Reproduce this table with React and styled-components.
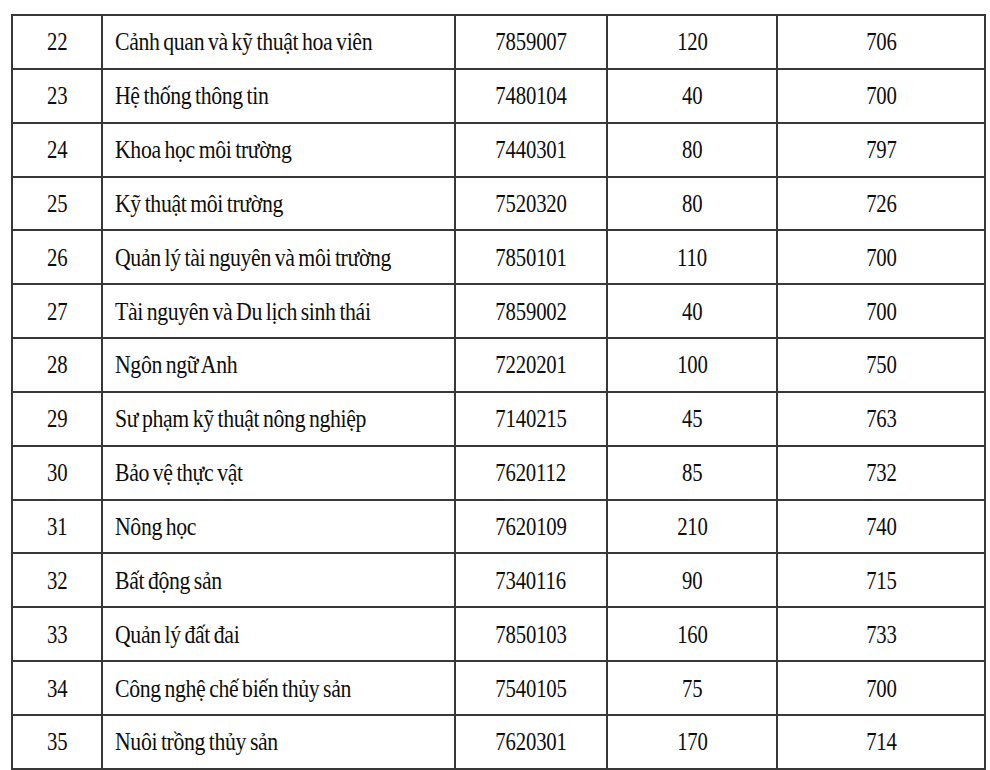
import React from 'react'
import styled, { createGlobalStyle } from 'styled-components'

const rows = [
  [22, 'Cảnh quan và kỹ thuật hoa viên', '7859007', 120, 706],
  [23, 'Hệ thống thông tin', '7480104', 40, 700],
  [24, 'Khoa học môi trường', '7440301', 80, 797],
  [25, 'Kỹ thuật môi trường', '7520320', 80, 726],
  [26, 'Quản lý tài nguyên và môi trường', '7850101', 110, 700],
  [27, 'Tài nguyên và Du lịch sinh thái', '7859002', 40, 700],
  [28, 'Ngôn ngữ Anh', '7220201', 100, 750],
  [29, 'Sư phạm kỹ thuật nông nghiệp', '7140215', 45, 763],
  [30, 'Bảo vệ thực vật', '7620112', 85, 732],
  [31, 'Nông học', '7620109', 210, 740],
  [32, 'Bất động sản', '7340116', 90, 715],
  [33, 'Quản lý đất đai', '7850103', 160, 733],
  [34, 'Công nghệ chế biến thủy sản', '7540105', 75, 700],
  [35, 'Nuôi trồng thủy sản', '7620301', 170, 714],
]

const columns = [90, 353, 152, 170, 208]

const GlobalStyle = createGlobalStyle`
  html, body {
    margin: 0;
    background: #fff;
  }
`

const Page = styled.div`
  padding: 14px 0 0 11px;
`

const Table = styled.table`
  width: 973px;
  border-collapse: collapse;
  table-layout: fixed;
  font-family: "Liberation Serif", "Times New Roman", serif;
  font-size: 25px;
  color: #0d0d0d;
`

const Col = styled.col`
  width: ${p => p.$w}px;
`

const Row = styled.tr`
  height: 53.85px;
`

const Cell = styled.td`
  border: 2px solid #383838;
  padding: 0 ${p => (p.$left ? '12px' : '0')};
  text-align: ${p => (p.$left ? 'left' : 'center')};
  vertical-align: middle;
  white-space: nowrap;
  line-height: 1;
`

// the source print uses a narrow Times cut, so squeeze each cell's text
const Text = styled.span`
  display: inline-block;
  transform: scaleX(${p => (p.$left ? 0.87 : 0.83)});
  transform-origin: ${p => (p.$left ? 'left' : 'center')} center;
  letter-spacing: ${p => (p.$left ? '-0.4px' : '-0.2px')};
  word-spacing: ${p => (p.$left ? '-1.5px' : '0')};
`

export default function App() {
  return (
    <Page>
      <GlobalStyle />
      <Table>
        <colgroup>
          {columns.map((w, i) => (
            <Col key={i} $w={w} />
          ))}
        </colgroup>
        <tbody>
          {rows.map(r => (
            <Row key={r[0]}>
              <Cell><Text>{r[0]}</Text></Cell>
              <Cell $left><Text $left>{r[1]}</Text></Cell>
              <Cell><Text>{r[2]}</Text></Cell>
              <Cell><Text>{r[3]}</Text></Cell>
              <Cell><Text>{r[4]}</Text></Cell>
            </Row>
          ))}
        </tbody>
      </Table>
    </Page>
  )
}
